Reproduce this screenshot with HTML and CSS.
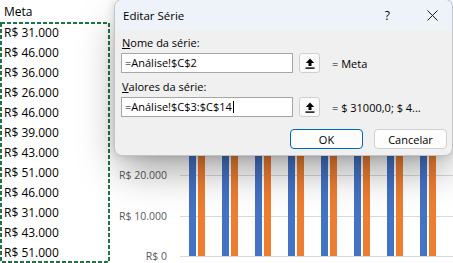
FILE: index.html
```html
<!DOCTYPE html>
<html lang="pt-BR">
<head>
<meta charset="utf-8">
<title>Editar Série</title>
<link rel="stylesheet" href="styles.css">
</head>
<body>
<div class="screen">
  <section class="sheet">
    <div class="cell head">Meta</div>
    <div class="range">
      <div class="cell">R$ 31.000</div>
      <div class="cell">R$ 46.000</div>
      <div class="cell">R$ 36.000</div>
      <div class="cell">R$ 26.000</div>
      <div class="cell">R$ 46.000</div>
      <div class="cell">R$ 39.000</div>
      <div class="cell">R$ 43.000</div>
      <div class="cell">R$ 51.000</div>
      <div class="cell">R$ 46.000</div>
      <div class="cell">R$ 31.000</div>
      <div class="cell">R$ 43.000</div>
      <div class="cell">R$ 51.000</div>
      <svg class="ants" width="111" height="242" viewBox="0 0 111 242"><rect x="1" y="1" width="108" height="239" fill="none" stroke="#217346" stroke-width="2" stroke-dasharray="4 2"/></svg>
    </div>
  </section>

  <section class="chart">
    <div class="axis">
      <div class="tick"><span>R$ 30.000</span></div>
      <div class="tick"><span>R$ 20.000</span></div>
      <div class="tick"><span>R$ 10.000</span></div>
      <div class="tick last"><span>R$ 0</span></div>
    </div>
    <div class="plot">
      <div class="gridlines">
        <div class="gl"></div><div class="gl"></div><div class="gl"></div><div class="gl last"></div>
      </div>
      <div class="bars">
        <div class="cat"><i class="bar blue" style="height:130px"></i><i class="bar orange" style="height:125px"></i></div>
        <div class="cat"><i class="bar blue" style="height:150px"></i><i class="bar orange" style="height:186px"></i></div>
        <div class="cat"><i class="bar blue" style="height:140px"></i><i class="bar orange" style="height:146px"></i></div>
        <div class="cat"><i class="bar blue" style="height:120px"></i><i class="bar orange" style="height:112px"></i></div>
        <div class="cat"><i class="bar blue" style="height:160px"></i><i class="bar orange" style="height:186px"></i></div>
        <div class="cat"><i class="bar blue" style="height:145px"></i><i class="bar orange" style="height:158px"></i></div>
        <div class="cat"><i class="bar blue" style="height:150px"></i><i class="bar orange" style="height:174px"></i></div>
        <div class="cat"><i class="bar blue" style="height:170px"></i><i class="bar orange" style="height:190px"></i></div>
      </div>
    </div>
  </section>

  <div class="dialog">
    <div class="titlebar">
      <span class="title">Editar Série</span>
      <span class="help">?</span>
      <svg class="close" width="11" height="11" viewBox="0 0 11 11"><path d="M0.5 0.5 L10.5 10.5 M10.5 0.5 L0.5 10.5" stroke="#1a1a1a" stroke-width="1"/></svg>
    </div>
    <div class="body">
      <div class="label"><u>N</u>ome da série:</div>
      <div class="row">
        <div class="input">=Análise!$C$2</div>
        <button class="pick"><svg width="10" height="11" viewBox="0 0 10 11"><path d="M5 0.5 L9.2 5 L6.5 5 L6.5 8 L3.5 8 L3.5 5 L0.8 5 Z" fill="#000"/><rect x="0.5" y="9.4" width="9" height="1.4" fill="#000"/></svg></button>
        <span class="value">= Meta</span>
      </div>
      <div class="label second"><u>V</u>alores da série:</div>
      <div class="row">
        <div class="input">=Análise!$C$3:$C$14<i class="caret"></i></div>
        <button class="pick"><svg width="10" height="11" viewBox="0 0 10 11"><path d="M5 0.5 L9.2 5 L6.5 5 L6.5 8 L3.5 8 L3.5 5 L0.8 5 Z" fill="#000"/><rect x="0.5" y="9.4" width="9" height="1.4" fill="#000"/></svg></button>
        <span class="value">= $ 31000,0; $ 4...</span>
      </div>
      <div class="actions">
        <button class="btn primary">OK</button>
        <button class="btn">Cancelar</button>
      </div>
    </div>
  </div>
</div>
</body>
</html>
```

FILE: styles.css
```css
* { box-sizing: border-box; }

html, body {
  margin: 0;
  padding: 0;
  background: #ffffff;
}

.screen {
  position: relative;
  width: 453px;
  height: 263px;
  overflow: hidden;
  display: flex;
  font-family: "Open Sans", "Noto Sans", sans-serif;
  color: #000;
}

/* ---------- sheet column ---------- */
.sheet {
  width: 112px;
  flex: none;
  display: flex;
  flex-direction: column;
}

.cell {
  height: 20px;
  line-height: 20px;
  padding-left: 4px;
  font-size: 12px;
  white-space: nowrap;
}

.cell.head {
  height: 23px;
  line-height: 22px;
  padding-top: 1px;
  padding-left: 4px;
}

.range {
  position: relative;
}

.ants {
  position: absolute;
  left: 0;
  top: -1px;
}

/* ---------- chart ---------- */
.chart {
  flex: 1;
  display: grid;
  grid-template-columns: 68px 1fr;
  grid-template-rows: 163px;
  align-content: end;
  padding-bottom: 6px;
}

.axis {
  display: grid;
  grid-template-rows: 41px 41px 41px 40px;
}

.tick {
  display: flex;
  align-items: flex-end;
  justify-content: flex-end;
  padding-right: 13px;
}

.tick span {
  font-size: 10.5px;
  line-height: 14px;
  color: #595959;
  margin-bottom: -6px;
  white-space: nowrap;
}

.plot {
  display: grid;
  height: 163px;
  grid-template-rows: 163px;
}

.gridlines, .bars {
  grid-area: 1 / 1;
  height: 163px;
}

.gridlines {
  display: grid;
  grid-template-rows: 41px 41px 41px 40px;
}

.gl {
  border-bottom: 1px solid #d9d9d9;
}

.bars {
  display: grid;
  grid-template-columns: repeat(8, 33px);
  grid-template-rows: 162px;
  align-items: end;
  padding-bottom: 1px;
}

.cat {
  display: flex;
  justify-content: center;
  align-items: flex-end;
  gap: 2px;
}

.bar {
  display: block;
  width: 7px;
}

.bar.blue { background: #4472c4; }
.bar.orange { background: #ed7d31; }

/* ---------- dialog ---------- */
.dialog {
  position: absolute;
  left: 114px;
  top: -1px;
  width: 339px;
  height: 157px;
  border: 1px solid #c4c4c4;
  border-radius: 8px;
  background: #f0f0f0;
  overflow: hidden;
  box-shadow: 0 18px 40px -6px rgba(0, 0, 0, 0.4), 0 0 10px rgba(0, 0, 0, 0.14);
  font-size: 11px;
}

.titlebar {
  height: 30px;
  background: #eef3fa;
  display: flex;
  align-items: center;
  padding-left: 8px;
  padding-right: 14px;
}

.title {
  flex: 1;
  font-size: 11.5px;
  padding-top: 1px;
}

.help {
  font-size: 12px;
  margin-right: 37px;
  padding-top: 1px;
}

.close {
  margin-top: 1px;
}

.body {
  padding: 5px 4px 0 6px;
}

.label {
  line-height: 16px;
  padding-left: 1px;
}

.label.second {
  margin-top: 6px;
}

.row {
  display: flex;
  align-items: center;
  margin-top: 2px;
}

.input {
  width: 172px;
  height: 20px;
  background: #fff;
  border: 1px solid #a6a6a6;
  padding-left: 3px;
  line-height: 18px;
  white-space: nowrap;
  display: flex;
  align-items: center;
}

.caret {
  display: inline-block;
  width: 1px;
  height: 12px;
  background: #000;
  margin-left: 1px;
}

.pick {
  width: 21px;
  height: 20px;
  margin-left: 6px;
  padding: 0;
  border: 1px solid #cfcfcf;
  border-radius: 3px;
  background: #fbfbfb;
  display: flex;
  align-items: center;
  justify-content: center;
}

.value {
  margin-left: 12px;
  white-space: nowrap;
}

.actions {
  display: flex;
  justify-content: flex-end;
  gap: 11px;
  margin-top: 12px;
  padding-right: 1px;
}

.btn {
  width: 73px;
  height: 20px;
  padding: 0;
  border: 1px solid #d0d0d0;
  border-radius: 4px;
  background: #fdfdfd;
  font-family: "Open Sans", "Noto Sans", sans-serif;
  font-size: 11px;
  color: #000;
}

.btn.primary {
  border-color: #0067c0;
}
```
